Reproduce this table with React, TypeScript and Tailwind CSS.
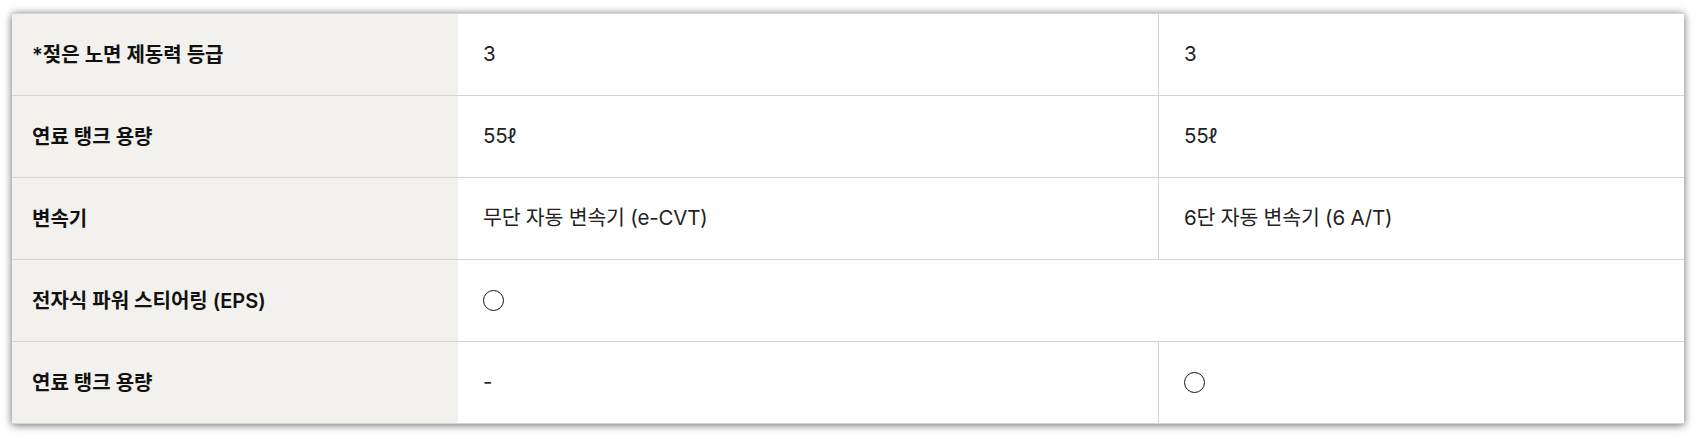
import React from 'react'

type Row = {
  label: string
  values: string[] // one value = spans both columns
}

const ROWS: Row[] = [
  { label: '*젖은 노면 제동력 등급', values: ['3', '3'] },
  { label: '연료 탱크 용량', values: ['55ℓ', '55ℓ'] },
  { label: '변속기', values: ['무단 자동 변속기 (e-CVT)', '6단 자동 변속기 (6 A/T)'] },
  { label: '전자식 파워 스티어링 (EPS)', values: ['○'] },
  { label: '연료 탱크 용량', values: ['-', '○'] },
]

const font = "font-['Inter','Noto_Sans_CJK_KR',sans-serif]"

function ValueText({ text }: { text: string }) {
  if (text === '○') {
    // 원 표시
    return <span className="block w-[21px] h-[21px] rounded-full border-[1.5px] border-[#111]" />
  }
  return <span>{text}</span>
}

export default function App() {
  return (
    <div className={`min-h-[439px] bg-white pt-[13px] pl-[12px] ${font}`}>
      <div className="w-[1672px] bg-white border-t border-[#d4d4d4] shadow-[0_1px_8px_rgba(0,0,0,0.6)]">
        {ROWS.map((row, i) => (
          <div
            key={i}
            className="grid grid-cols-[446px_700px_1fr] h-[82px] border-b border-[#d4d4d4]"
          >
            <div className="bg-[#f2f1ed] flex items-center pl-[20px] text-[20px] font-semibold text-[#111]">
              {row.label}
            </div>
            {row.values.length === 1 ? (
              <div className="col-span-2 flex items-center pl-[25px] text-[20.5px] tracking-[-0.01em] text-[#222]">
                <ValueText text={row.values[0]} />
              </div>
            ) : (
              <>
                <div className="flex items-center pl-[25px] text-[20.5px] tracking-[-0.01em] text-[#222]">
                  <ValueText text={row.values[0]} />
                </div>
                <div className="flex items-center pl-[25px] border-l border-[#d4d4d4] text-[20.5px] tracking-[-0.01em] text-[#222]">
                  <ValueText text={row.values[1]} />
                </div>
              </>
            )}
          </div>
        ))}
      </div>
    </div>
  )
}
